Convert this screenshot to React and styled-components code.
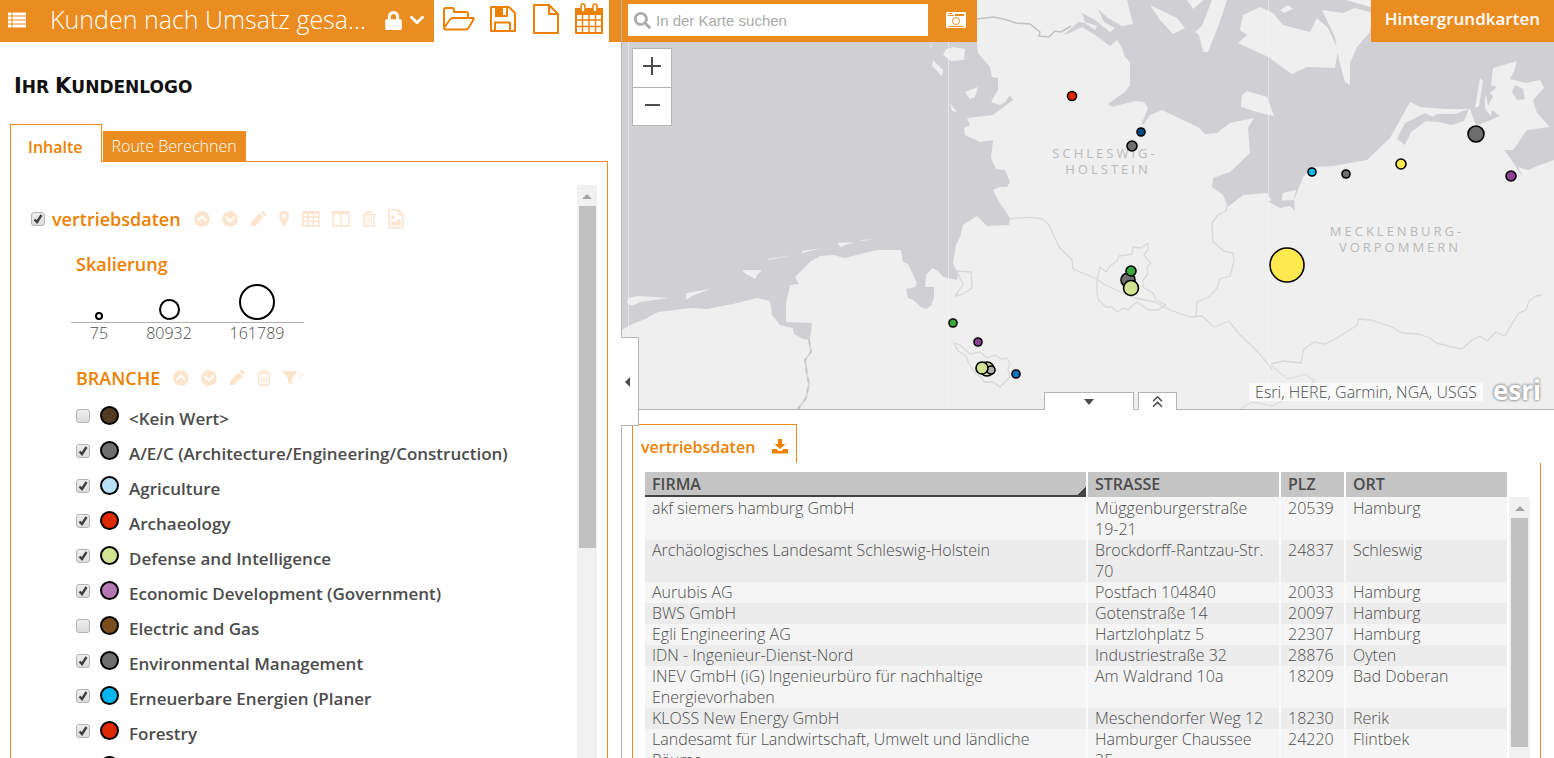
import React from 'react';
import styled, { createGlobalStyle } from 'styled-components'
import { FaLock, FaSearch, FaChevronCircleUp, FaChevronCircleDown } from 'react-icons/fa'
import { FiChevronDown, FiChevronsUp } from 'react-icons/fi'

const orange = '#ea8c20'
const text = '#ec8000'

const branches = [
  { name: '<Kein Wert>', color: '#533b22', checked: false },
  { name: 'A/E/C (Architecture/Engineering/Construction)', color: '#6e6e6e', checked: true },
  { name: 'Agriculture', color: '#b9dff7', checked: true },
  { name: 'Archaeology', color: '#df2900', checked: true },
  { name: 'Defense and Intelligence', color: '#d2e392', checked: true },
  { name: 'Economic Development (Government)', color: '#b377b4', checked: true },
  { name: 'Electric and Gas', color: '#7b4f1d', checked: false },
  { name: 'Environmental Management', color: '#6e6e6e', checked: true },
  { name: 'Erneuerbare Energien (Planer', color: '#00b6f1', checked: true },
  { name: 'Forestry', color: '#df2900', checked: true },
  { name: 'Gas', color: '#4c6b1f', checked: true },
]

const rows = [
  ['akf siemers hamburg GmbH', 'Müggenburgerstraße 19-21', '20539', 'Hamburg'],
  ['Archäologisches Landesamt Schleswig-Holstein', 'Brockdorff-Rantzau-Str. 70', '24837', 'Schleswig'],
  ['Aurubis AG', 'Postfach 104840', '20033', 'Hamburg'],
  ['BWS GmbH', 'Gotenstraße 14', '20097', 'Hamburg'],
  ['Egli Engineering AG', 'Hartzlohplatz 5', '22307', 'Hamburg'],
  ['IDN - Ingenieur-Dienst-Nord', 'Industriestraße 32', '28876', 'Oyten'],
  ['INEV GmbH (iG) Ingenieurbüro für nachhaltige Energievorhaben', 'Am Waldrand 10a', '18209', 'Bad Doberan'],
  ['KLOSS New Energy GmbH', 'Meschendorfer Weg 12', '18230', 'Rerik'],
  ['Landesamt für Landwirtschaft, Umwelt und ländliche Räume', 'Hamburger Chaussee 25', '24220', 'Flintbek'],
]

// x, y, radius, fill
const points = [
  [1072, 96, 4.5, '#df2900'],
  [1141, 132, 4, '#004a80'],
  [1132, 146, 5, '#6e6e6e'],
  [1312, 172, 4, '#00b6f1'],
  [1346, 174, 4, '#6e6e6e'],
  [1401, 164, 5, '#ffe94f'],
  [1476, 134, 8, '#6e6e6e'],
  [1511, 176, 5, '#8f3f97'],
  [1287, 265, 17, '#ffe94f'],
  [1128, 280, 7, '#6e6e6e'],
  [1131, 271, 5, '#38a83c'],
  [1131, 288, 7.5, '#d2e392'],
  [953, 323, 4, '#38a83c'],
  [978, 342, 4, '#8f3f97'],
  [987, 369, 7, '#d2e392'],
  [991, 370, 4, '#b2b2b2'],
  [982, 368, 6, '#d2e392'],
  [1016, 374, 4, '#0074c0'],
]

const MenuIcon = () => (
  <svg width="18" height="16" viewBox="0 0 18 16" fill="none" stroke="#fff" strokeWidth="2.800">
    <path d="M0 2h3.500M0 6h3.500M0 10h3.500M0 14h3.500M4.500 2H18M4.500 6H18M4.500 10H18M4.500 14H18" />
  </svg>
)
const FolderIcon = () => (
  <svg width="34" height="26" viewBox="0 0 34 26" fill="none" stroke={text} strokeWidth="2" strokeLinejoin="round">
    <path d="M2 21V4q0-2 2-2h6q2 0 2 2v2h12q2 0 2 2v3M2 22q0 1.500 2 1.500h20q1.500 0 2.500-1.500l5-8.500q1-1.500-1-1.500H11q-2 0-3 1.500L2 22" />
  </svg>
)
const SaveIcon = () => (
  <svg width="28" height="28" viewBox="0 0 28 28" fill="none" stroke={text} strokeWidth="2" strokeLinejoin="round">
    <path d="M1 2h18l6 6v18H1zM6 2v9h11V2M5 26v-8.500h15V26" />
    <path d="M6 2h6v9H6z" fill={text} />
  </svg>
)
const FileIcon = () => (
  <svg width="28" height="32" viewBox="0 0 28 32" fill="none" stroke={text} strokeWidth="2" strokeLinejoin="round">
    <path d="M2 2h15l9 9v19H2zM17 2v9h9" />
  </svg>
)
const CalendarIcon = () => (
  <svg width="30" height="32" viewBox="0 0 30 32" fill="none" stroke={text} strokeWidth="2">
    <path d="M2 6h26v5H2z" fill={text} />
    <path d="M2 10v20h26V10" strokeLinejoin="round" />
    <path d="M8.500 11v19M15 11v19M21.500 11v19M2 17h26M2 23.500h26" strokeWidth="1.400" />
    <rect x="7" y="1" width="4" height="8" rx="2" fill="#fff" strokeWidth="1.500" />
    <rect x="19" y="1" width="4" height="8" rx="2" fill="#fff" strokeWidth="1.500" />
  </svg>
)
const CameraIcon = () => (
  <svg width="20" height="16" viewBox="0 0 20 16" fill="none" stroke={orange}>
    <rect width="20" height="16" rx="1.500" fill="#fff" stroke="none" />
    <path d="M3 1.500h3M2 3.500h6M2.500 14.500h15" />
    <path d="M9 3h9" strokeWidth="2" />
    <circle cx="10" cy="9" r="3.500" />
  </svg>
)
const PencilIcon = () => (
  <svg width="16" height="16" viewBox="0 0 16 16" fill="currentColor">
    <path d="M1 11l8.500-8.500 4 4L5 15H1zM10.500 1.500l1-1q1-1 2 0l2 2q1 1 0 2l-1 1z" />
  </svg>
)
const PinIcon = () => (
  <svg width="12" height="16" viewBox="0 0 12 16" fill="currentColor" fillRule="evenodd">
    <path d="M6 0a5 5 0 0 1 5 5q0 1.500-1 3.500L6 16 2 8.500Q1 6.500 1 5a5 5 0 0 1 5-5zM6 2.800a2.300 2.300 0 1 0 0 4.600a2.300 2.300 0 1 0 0-4.600z" />
  </svg>
)
const TableIcon = () => (
  <svg width="18" height="16" viewBox="0 0 18 16" fill="none" stroke="currentColor" strokeWidth="1.500">
    <path d="M1 1.500h16" strokeWidth="3" />
    <path d="M1 1h16v14H1zM1 6h16M1 10.500h16M6.300 1v14M11.600 1v14" />
  </svg>
)
const ColumnsIcon = () => (
  <svg width="18" height="16" viewBox="0 0 18 16" fill="none" stroke="currentColor" strokeWidth="1.500">
    <path d="M1 1h16v14H1zM9 1v14" />
    <path d="M1 1.500h16" strokeWidth="3" />
  </svg>
)
const TrashIcon = () => (
  <svg width="14" height="16" viewBox="0 0 14 16" fill="none" stroke="currentColor" strokeWidth="1.400">
    <path d="M0 3.500h14M4.500 3.500V1h5v2.500M2 3.500V15h10V3.500" />
    <path d="M4.800 6v7M7 6v7M9.200 6v7" strokeWidth="1" />
  </svg>
)
const ImageIcon = () => (
  <svg width="16" height="20" viewBox="0 0 16 20" fill="none" stroke="currentColor" strokeWidth="1.500">
    <path d="M1 1h9.500L15 5.500V19H1zM10.500 1v4.500H15" />
    <circle cx="5" cy="8.500" r="1.800" fill="currentColor" stroke="none" />
    <path d="M3 16.500v-3l2-2 2 2 4-4 2 2v5z" fill="currentColor" stroke="none" />
  </svg>
)
const FilterIcon = () => (
  <svg width="22" height="16" viewBox="0 0 22 16" fill="currentColor">
    <path d="M0 1h14v1.500L9 8v7l-4-3V8L0 2.500z" />
    <path d="M18 1v8M14.500 5h7" stroke="currentColor" strokeWidth="2" opacity=".3" />
  </svg>
)
const DownloadIcon = () => (
  <svg width="16" height="15" viewBox="0 0 16 15" fill="currentColor">
    <path d="M6 0h4v5h3.500L8 10 2.500 5H6zM0 10h4.500l2 2h3l2-2H16v4.500H0z" />
  </svg>
)

const MapDrawing = () => (
  <MapSvg viewBox="622 0 932 409" preserveAspectRatio="xMinYMin slice">
    <g fill="#efefef">
      <path d="M622 330L630 325 645 319 658 312 690 308 707 309 733 304 757 298 770 301 772 315 780 325 793 328 794 334 803 339 810 340 812 323 786 322 786 303 790 285 799 284 795 277 810 262 820 256 833 255 845 258 860 254 877 250 901 250 903 262 908 264 917 283 915 287 906 289 908 298 913 300 921 307 926 309 931 306 934 298 934 287 925 287 926 275 932 268 938 271 943 277 957 280 958 275 953 263 956 245 960 237 963 225 977 216 987 226 1009 225 1010 218 998 200 993 190 1000 187 1007 187 1010 182 1005 170 996 169 991 158 993 140 980 142 965 135 964 128 970 125 967 118 993 115 1013 100 1010 95 1005 102 1000 105 991 102 998 90 998 78 992 77 990 67 978 53 977 42 977 0H1127L1133 24 1122 26 1108 18 1098 9 1104 22 1115 28 1110 32 1095 20 1082 13 1085 22 1097 26 1095 30 1085 23 1078 22 1073 27 1063 35 1072 32 1082 27 1095 35 1102 40 1110 46 1117 40 1122 48 1125 57 1130 62 1130 85 1125 92 1108 104 1112 107 1135 101 1144 102 1148 108 1141 125 1144 124 1150 115 1162 110 1185 121 1198 127 1205 134 1217 133 1230 123 1254 118 1248 128 1250 153 1230 172 1213 178 1212 187 1223 195 1228 207 1243 195 1267 193 1273 203 1280 208 1283 193 1296 190 1293 202 1300 185 1303 177 1313 167 1333 166 1367 160 1390 138 1400 120 1410 102 1420 107 1445 109 1470 109 1475 123 1480 130 1500 145 1508 155 1515 165 1519 172 1523 177 1518 167 1528 170 1540 165 1554 160V409H622z" />
      <path d="M1242 95l5-4 20 6 7 19-10-2-23-7z M1243 15l17-8 13 6 10 12 27 7 7-14 11 10 10 22-3 18-28-1-15 7-24-17-30-14 9-8-7-5z M1322 10l21 3 12-5 18 5-3 19-13 15-7 16v22l-5-3-6-22-4-23z M1212 0h15l-8 24-11 28-5 0-4-17-4-3 7-6z M1150 5l27 13 8 10-12 6-13-14z M1187 0h17l-11 9z M1280 10l8-5 5 4-9 4z M1346 0h28v8z" />
      <path d="M1493 68l24-7-3 10-4 8 16 4 14-3 4 8-11 12 4 13 13 14-23 3-14 20-10 0-18-15-7-10 15-6-8-10v-12l12-10-6-2z M1480 78l3 3-4 25-4 2z" />
      <path d="M943 55l3-6 7-2 12 2-1 11-13 1z M933 60l10 10-1 6-10-10z M965 92l13-5-3 10-5 2z M950 103l7 9-5-1z M931 43l1 6-2-3z" />
      <path d="M628 298l10-2 30 2-28 4q-8 6-13 1z M686 293l24-4-18 7-6 4z M742 270l20 0-4 4-3 5-9-5z M768 259l25-4-24 5z M802 251l20-3-20 5z M838 243l16-1-14 5z M861 240l15-1-15 2z" />
    </g>
    <g fill="#d0cfd4">
      <path d="M1405 123l20-10 8 4 4-3 18 0 14-5-5 12-12 4-14-3-12-1-15 11-6 13-8-6z M1268 201l26-1 1 11-5-5-10 2z" />
      <path d="M1515 85l8 4 2 10-8 1-5-8z M1485 88l8 8-5 10z M1492 110l8 6-10 4z" />
    </g>
    <g fill="none" stroke="#d8d8da" strokeWidth="1.300" strokeLinejoin="round">
      <path d="M1010 219q18-3 32 0l7 6 10 22 13 13 1 9 24 10 8 6 30 13 20 4 15 8 20 7 12-1 12 11 15-6 10 13 16 15 8 9 9 11" />
      <path d="M1097 280l3-13 6 5 4-6 7-5 2-5 7-1 6-1 1-7 8 1 7-5 0 7-4 5 4 5 3 3-4 4 1 7-5 6 0 7 10 6 3 7 10 5-8 5-9 0-12-8-5 4-4 4-5-2-6 4-5-5-6 0-8-8-1-8z" />
      <path d="M1228 202l-2 9-8 4-6 8 1 19 11 9 9 2 1 8-4 15-10 3-3 9-8 9-12 5-1 14M1271 364l12-3 18 2 3-14 10-7 11 2 12-6 14-9 6-4 2-6 12 1 9 3 12 4 10 6 16 1 12 4 6 5 12 3 14 3 10-9 8-4 7 5 9-9 9 4 8-14 6-9 7-3 3-9 7-5 6-1" />
      <path d="M955 296l8-11-6-14 14 1 1 16-9 6zM954 343l6 2 10 9 10-2 7 6 8-3 6 4 6-1 3 7-2 4 2 8-6 6-4 4-7-5-9 0-3-5-5-3-7-10-3-8-8-5z" />
      <path d="M1272 366l8 7 8 6 17-5 10 7-5 3 20 2M1240 409l12-7 20 4 10-5" stroke="#dededf" />
    </g>
    <g fill="none" stroke="#c2c2c2" strokeWidth="1.500">
      <path d="M809 340l2 12-6 8 2 14 2 10-3 14-8 11" stroke="#d8d8da" strokeWidth="2" />
      <path d="M809 340l2 12-6 8 2 14 2 10-3 14-8 11" strokeDasharray="5 5" />
      <path d="M977 19l16-2 11 2 12 4 14 1 10 8 -1 4 10 1 6-6 6 1 10-6" />
    </g>
    <path d="M628.500 42v367M948.500 42v367M1268.500 0v409" stroke="#f3f3f3" strokeOpacity=".6" />
    <MapLabel x="1105" y="158">SCHLESWIG-</MapLabel>
    <MapLabel x="1108" y="174">HOLSTEIN</MapLabel>
    <MapLabel x="1397" y="236">MECKLENBURG-</MapLabel>
    <MapLabel x="1400" y="252">VORPOMMERN</MapLabel>
    <g stroke="#000" strokeWidth="1.600">
      {points.map(([x, y, r, fill]) => <circle key={`${x}-${y}`} cx={x} cy={y} r={r} fill={fill} />)}
    </g>
  </MapSvg>
)

const App = () => {
  return (
    <Page>
      <GlobalStyle />
      <Sidebar>
        <TopBar>
          <TitleBar>
            <BarButton aria-label="Menü"><MenuIcon /></BarButton>
            <Title>Kunden nach Umsatz gesa...</Title>
            <LockButton aria-label="Sperre"><FaLock size={19} /><FiChevronDown size={22} strokeWidth={3} /></LockButton>
          </TitleBar>
          <Tools>
            <ToolButton aria-label="Öffnen"><FolderIcon /></ToolButton>
            <ToolButton aria-label="Speichern"><SaveIcon /></ToolButton>
            <ToolButton aria-label="Neu"><FileIcon /></ToolButton>
            <ToolButton aria-label="Kalender"><CalendarIcon /></ToolButton>
          </Tools>
        </TopBar>
        <Logo><Big>I</Big>HR <Big>K</Big>UNDENLOGO</Logo>
        <Tabs>
          <Tab $active>Inhalte</Tab>
          <Tab>Route Berechnen</Tab>
        </Tabs>
        <Panel>
          <Layers>
            <LayerHead>
              <Check type="checkbox" id="layer" defaultChecked />
              <LayerName as="label" htmlFor="layer">vertriebsdaten</LayerName>
              <Actions>
                <Action aria-label="Nach oben"><FaChevronCircleUp size={16} /></Action>
                <Action aria-label="Nach unten"><FaChevronCircleDown size={16} /></Action>
                <Action aria-label="Bearbeiten"><PencilIcon /></Action>
                <Action aria-label="Zoomen"><PinIcon /></Action>
                <Action aria-label="Tabelle"><TableIcon /></Action>
                <Action aria-label="Spalten"><ColumnsIcon /></Action>
                <Action aria-label="Löschen"><TrashIcon /></Action>
                <Action aria-label="Bild"><ImageIcon /></Action>
              </Actions>
            </LayerHead>
            <Group>
              <LayerName>Skalierung</LayerName>
              <Scale>
                <ScaleItem $size={8} $width={38}>75</ScaleItem>
                <ScaleItem $size={21} $width={102}>80932</ScaleItem>
                <ScaleItem $size={36} $width={74}>161789</ScaleItem>
              </Scale>
              <GroupHead>
                <LayerName>BRANCHE</LayerName>
                <Actions>
                  <Action aria-label="Nach oben"><FaChevronCircleUp size={16} /></Action>
                  <Action aria-label="Nach unten"><FaChevronCircleDown size={16} /></Action>
                  <Action aria-label="Bearbeiten"><PencilIcon /></Action>
                  <Action aria-label="Löschen"><TrashIcon /></Action>
                  <Action aria-label="Filter"><FilterIcon /></Action>
                </Actions>
              </GroupHead>
              {branches.map((branch) => (
                <Branch key={branch.name}>
                  <Check type="checkbox" defaultChecked={branch.checked} />
                  <Swatch $color={branch.color} />
                  <BranchName>{branch.name}</BranchName>
                </Branch>
              ))}
            </Group>
          </Layers>
          <Scrollbar><Arrow /><Thumb $length={342} /></Scrollbar>
        </Panel>
      </Sidebar>
      <Main>
        <MapArea>
          <MapDrawing />
          <MapBar>
            <SearchBox>
              <FaSearch size={17} />
              <SearchInput aria-label="In der Karte suchen" placeholder="In der Karte suchen" />
            </SearchBox>
            <BarButton aria-label="Foto"><CameraIcon /></BarButton>
          </MapBar>
          <Basemaps>Hintergrundkarten</Basemaps>
          <ZoomControl>
            <ZoomButton aria-label="Vergrößern">
              <svg width="20" height="20" stroke="#4c4c4c" strokeWidth="2"><path d="M1 10h18M10 1v18" /></svg>
            </ZoomButton>
            <ZoomButton aria-label="Verkleinern">
              <svg width="20" height="20" stroke="#4c4c4c" strokeWidth="2"><path d="M3 10h15" /></svg>
            </ZoomButton>
          </ZoomControl>
          <SideHandle aria-label="Seitenleiste"><svg width="5" height="10"><path d="M5 0v10L0 5z" fill="#4c4c4c" /></svg></SideHandle>
          <BottomHandles>
            <BottomHandle $width={90} aria-label="Tabelle einklappen"><svg width="10" height="6"><path d="M0 0h10L5 6z" fill="#4c4c4c" /></svg></BottomHandle>
            <BottomHandle $width={39} aria-label="Tabelle vergrößern"><FiChevronsUp size={19} /></BottomHandle>
          </BottomHandles>
          <Credits>
            <Sources>Esri, HERE, Garmin, NGA, USGS</Sources>
            <Esri>esri</Esri>
          </Credits>
        </MapArea>
        <Results>
          <ResultTab>
            vertriebsdaten
            <ToolButton aria-label="Herunterladen"><DownloadIcon /></ToolButton>
          </ResultTab>
          <ResultBody>
            <TableWrap>
              <Table>
                <colgroup>
                  <col />
                  <Col $width={193} />
                  <Col $width={65} />
                  <Col $width={161} />
                </colgroup>
                <thead>
                  <tr>
                    <Th><Sorted>FIRMA</Sorted></Th>
                    <Th>STRASSE</Th>
                    <Th>PLZ</Th>
                    <Th>ORT</Th>
                  </tr>
                </thead>
                <tbody>
                  {rows.map((row) => (
                    <Row key={row[0]}>
                      {row.map((cell) => <Td key={cell}>{cell}</Td>)}
                    </Row>
                  ))}
                </tbody>
              </Table>
            </TableWrap>
            <TableScroll><Arrow /><Thumb $length={229} /></TableScroll>
          </ResultBody>
        </Results>
      </Main>
    </Page>
  )
}

const GlobalStyle = createGlobalStyle`
  *, *::before, *::after { box-sizing: border-box; }
  body {
    margin: 0;
    font-family: 'Open Sans', sans-serif;
    color: #4c4c4c;
    background: #fff;
  }
  button {
    font-family: inherit;
    padding: 0;
    border: none;
    background: none;
    cursor: pointer;
  }
  svg { display: block; }
`
const Page = styled.div`
  display: flex;
  height: 100vh;
  overflow: hidden;
`
const Sidebar = styled.aside`
  display: flex;
  flex-direction: column;
  flex: 0 0 621px;
`
const TopBar = styled.header`
  display: flex;
  height: 42px;
  flex-shrink: 0;
  background: ${orange};
`
const TitleBar = styled.div`
  display: flex;
  align-items: center;
  flex: 1;
  padding: 0 6px 2px 8px;
  color: #fff;
`
const BarButton = styled.button`
  color: #fff;
`
const Title = styled.h1`
  flex: 1;
  margin: 0 0 2px 24px;
  font-size: 25px;
  font-weight: 300;
  line-height: 38px;
  white-space: nowrap;
`
const LockButton = styled(BarButton)`
  display: flex;
  align-items: center;
  gap: 3px;
`
const Tools = styled.div`
  display: flex;
  align-items: center;
  justify-content: space-between;
  width: 175px;
  margin-right: 12px;
  padding: 0 5px 4px 8px;
  background: #fff;
`
const ToolButton = styled.button`
  color: ${text};
`
const Logo = styled.div`
  padding: 32px 14px 0;
  height: 82px;
  flex-shrink: 0;
  font-family: 'DejaVu Sans', sans-serif;
  font-size: 17px;
  font-weight: 700;
  line-height: 24px;
  color: #111;
`
const Big = styled.span`
  font-size: 21px;
`
const Tabs = styled.div`
  display: flex;
  align-items: flex-end;
  flex-shrink: 0;
  gap: 1px;
  padding-left: 10px;
`
const Tab = styled.button`
  position: relative;
  height: ${p => p.$active ? 38 : 30}px;
  margin-bottom: ${p => p.$active ? -1 : 0}px;
  padding: ${p => p.$active ? '6px 18px 0 17px' : '0 9px'};
  border: ${p => p.$active ? `1px solid ${orange}` : 'none'};
  border-bottom: none;
  background: ${p => p.$active ? '#fff' : orange};
  color: ${p => p.$active ? text : '#fff'};
  font-size: 16px;
  font-weight: ${p => p.$active ? 600 : 300};
`
const Panel = styled.section`
  display: flex;
  flex: 1;
  min-height: 0;
  margin: 0 13px 0 10px;
  padding: 23px 10px 0 20px;
  border: 1px solid ${orange};
  border-bottom: none;
`
const Layers = styled.div`
  flex: 1;
  min-width: 0;
  padding-top: 20px;
  overflow: hidden;
`
const LayerHead = styled.div`
  display: flex;
  align-items: center;
  height: 28px;
`
const LayerName = styled.span`
  font-size: 18px;
  font-weight: 600;
  line-height: 28px;
  color: ${text};
`
const Check = styled.input`
  appearance: none;
  flex-shrink: 0;
  width: 14px;
  height: 14px;
  margin: 0 7px 0 0;
  border: 1px solid #b4b4b4;
  border-radius: 3px;
  background: linear-gradient(#eee, #dcdcdc);
  &:checked {
    background: url("data:image/svg+xml,%3Csvg xmlns='http://www.w3.org/2000/svg' viewBox='0 0 12 12'%3E%3Cpath d='M2.500 6.500l2.500 2.500 4.500-7' fill='none' stroke='%23404040' stroke-width='2.400'/%3E%3C/svg%3E"), linear-gradient(#eee, #dcdcdc);
  }
`
const Actions = styled.div`
  display: flex;
  align-items: center;
  gap: 12px;
  margin-left: 13px;
  color: #fce4cd;
`
const Action = styled.button`
  color: inherit;
`
const Group = styled.div`
  padding-left: 45px;
  margin-top: 17px;
`
const Scale = styled.div`
  position: relative;
  display: flex;
  width: 233px;
  margin-left: -5px;
  padding-left: 9px;
  &::after {
    content: '';
    position: absolute;
    left: 0;
    right: 0;
    bottom: 20px;
    height: 1px;
    background: #b0b0b0;
  }
`
const ScaleItem = styled.div`
  display: flex;
  flex-direction: column;
  align-items: center;
  justify-content: flex-end;
  width: ${p => p.$width}px;
  height: 65px;
  font-size: 16px;
  font-weight: 300;
  line-height: 20px;
  &::before {
    content: '';
    width: ${p => p.$size}px;
    height: ${p => p.$size}px;
    margin-bottom: 3px;
    border: 2px solid #000;
    border-radius: 50%;
  }
`
const GroupHead = styled.div`
  display: flex;
  align-items: center;
  height: 28px;
  margin: 21px 0 6px;
`
const Branch = styled.label`
  display: flex;
  align-items: center;
  height: 35px;
`
const Swatch = styled.span`
  width: 19px;
  height: 19px;
  margin: 0 10px 0 3px;
  border: 2px solid #000;
  border-radius: 50%;
  background: ${p => p.$color};
`
const BranchName = styled.span`
  padding-top: 6px;
  font-size: 17px;
  font-weight: 600;
`
const Scrollbar = styled.div`
  display: flex;
  flex-direction: column;
  align-items: center;
  width: 20px;
  background: #f1f1f1;
`
const Arrow = styled.div`
  margin: 9px 0 7px;
  border: 5px solid transparent;
  border-top-width: 0;
  border-bottom-color: #a3a3a3;
`
const Thumb = styled.div`
  width: 17px;
  height: ${p => p.$length}px;
  background: #c1c1c1;
`
const Main = styled.main`
  display: flex;
  flex-direction: column;
  flex: 1;
  min-width: 0;
`
const MapArea = styled.section`
  position: relative;
  height: 410px;
  flex-shrink: 0;
  border-left: 1px solid #b4b4b4;
  border-bottom: 1px solid #b4b4b4;
  background: #d0cfd4;
`
const MapSvg = styled.svg`
  width: 100%;
  height: 100%;
`
const MapLabel = styled.text`
  font-size: 13px;
  letter-spacing: 3px;
  text-anchor: middle;
  fill: #b9b9b9;
`
const MapBar = styled.div`
  position: absolute;
  top: 0;
  left: 0;
  display: flex;
  align-items: center;
  gap: 18px;
  width: 355px;
  height: 42px;
  padding: 0 6px 2px;
  background: ${orange};
`
const SearchBox = styled.div`
  display: flex;
  align-items: center;
  gap: 5px;
  width: 300px;
  height: 32px;
  padding: 0 6px;
  background: #fff;
  color: #aaa;
`
const SearchInput = styled.input`
  flex: 1;
  padding: 0;
  border: none;
  outline: none;
  font-family: 'Liberation Sans', sans-serif;
  font-size: 15px;
  &::placeholder { color: #aaa; }
`
const Basemaps = styled.button`
  position: absolute;
  top: 0;
  right: 0;
  height: 42px;
  && { padding: 0 14px 6px; }
  && { background: ${orange}; }
  color: #fff;
  font-size: 17px;
  font-weight: 600;
`
const ZoomControl = styled.div`
  position: absolute;
  top: 48px;
  left: 10px;
  width: 40px;
  border: 1px solid #b4b4b4;
  background: #fff;
`
const ZoomButton = styled.button`
  display: flex;
  align-items: center;
  justify-content: center;
  width: 100%;
  height: 38px;
  && { padding-bottom: 4px; }
  & + & { border-top: 1px solid #b4b4b4; }
`
const SideHandle = styled.button`
  position: absolute;
  top: 337px;
  left: -1px;
  z-index: 1;
  display: flex;
  align-items: center;
  justify-content: flex-start;
  width: 18px;
  height: 89px;
  && {
    padding-left: 4px;
    border: 1px solid #b4b4b4;
    border-left: none;
    background: #fff;
  }
`
const BottomHandles = styled.div`
  position: absolute;
  left: 422px;
  bottom: -1px;
  display: flex;
  align-items: flex-end;
  gap: 4px;
`
const BottomHandle = styled.button`
  display: flex;
  align-items: center;
  justify-content: center;
  width: ${p => p.$width}px;
  height: 18px;
  color: #4c4c4c;
  && {
    border: 1px solid #b4b4b4;
    border-bottom: none;
    background: #fff;
  }
`
const Credits = styled.div`
  position: absolute;
  right: 13px;
  bottom: 3px;
  display: flex;
  align-items: center;
  gap: 10px;
`
const Sources = styled.span`
  padding: 0 6px;
  background: rgba(255, 255, 255, .7);
  font-size: 16px;
  font-weight: 300;
  line-height: 18px;
`
const Esri = styled.span`
  padding-bottom: 4px;
  color: #fff;
  font-size: 26px;
  font-weight: 700;
  line-height: 24px;
  text-shadow: 0 0 3px #888, 0 0 3px #888;
`
const Results = styled.section`
  display: flex;
  flex-direction: column;
  flex: 1;
  min-height: 0;
  padding: 14px 13px 0 10px;
  border-left: 1px solid #b4b4b4;
`
const ResultTab = styled.div`
  display: flex;
  align-items: center;
  justify-content: space-between;
  width: 165px;
  height: 39px;
  flex-shrink: 0;
  padding: 5px 8px 0;
  border: 1px solid ${orange};
  border-bottom: none;
  color: ${text};
  font-size: 16px;
  font-weight: 600;
`
const ResultBody = styled.div`
  display: flex;
  flex: 1;
  gap: 2px;
  min-height: 0;
  padding: 9px 10px 0 12px;
  border: 1px solid ${orange};
  border-width: 0 1px;
`
const TableWrap = styled.div`
  flex: 1;
  min-width: 0;
  overflow: hidden;
`
const Table = styled.table`
  width: 100%;
  table-layout: fixed;
  border-spacing: 0;
  line-height: 21px;
`
const Col = styled.col`
  width: ${p => p.$width}px;
`
const Th = styled.th`
  height: 25px;
  padding: 0 0 0 7px;
  border-right: 2px solid #fff;
  background: #c5c5c5;
  background-clip: padding-box;
  text-align: left;
  font-size: 16px;
  font-weight: 600;
  &:first-child { padding: 0; }
  &:last-child { border-right: none; }
`
const Sorted = styled.div`
  height: 25px;
  padding: 2px 0 0 7px;
  border-bottom: 2px solid #444;
  background: linear-gradient(135deg, transparent 50%, #444 50%) right bottom / 8px 8px no-repeat;
`
const Row = styled.tr`
  background: #f5f5f5;
  &:nth-child(even) { background: #ececec; }
`
const Td = styled.td`
  padding: 0 7px;
  border-right: 2px solid #fafafa;
  vertical-align: top;
  font-size: 16px;
  font-weight: 300;
  ${Row}:first-child & { padding-top: 1px; }
  &:last-child { border-right: none; }
`
const TableScroll = styled(Scrollbar)`
  width: 21px;
  margin-top: 25px;
`

export default App
